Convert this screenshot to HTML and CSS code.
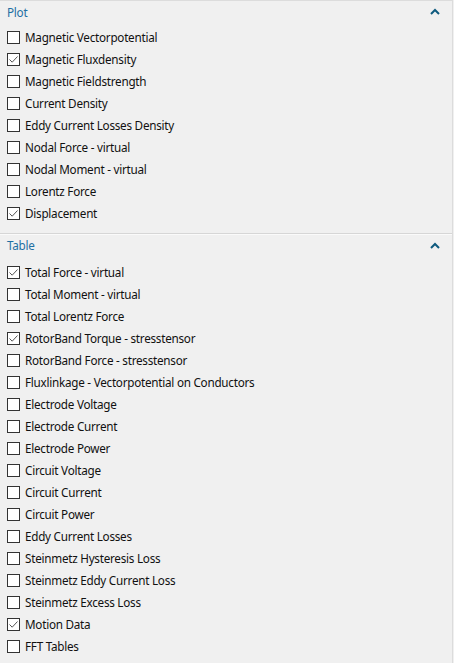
FILE: index.html
```html
<!DOCTYPE html>
<html>
<head>
<meta charset="utf-8">
<link rel="stylesheet" href="styles.css">
</head>
<body>
<div class="panel">
  <section class="group">
    <div class="group-head">
      <span class="group-title">Plot</span>
      <svg class="chev" width="10" height="7" viewBox="0 0 10 7"><path d="M1 6 L5 2 L9 6" fill="none" stroke="#0e5a7e" stroke-width="2"/></svg>
    </div>
    <ul class="list">
      <li class="item"><span class="box"></span>Magnetic Vectorpotential</li>
      <li class="item"><span class="box checked"><svg viewBox="0 0 13 13"><path d="M2.5 6.5 L5.2 9.2 L10.5 3.5" fill="none" stroke="#555" stroke-width="1"/></svg></span>Magnetic Fluxdensity</li>
      <li class="item"><span class="box"></span>Magnetic Fieldstrength</li>
      <li class="item"><span class="box"></span>Current Density</li>
      <li class="item"><span class="box"></span>Eddy Current Losses Density</li>
      <li class="item"><span class="box"></span>Nodal Force - virtual</li>
      <li class="item"><span class="box"></span>Nodal Moment - virtual</li>
      <li class="item"><span class="box"></span>Lorentz Force</li>
      <li class="item"><span class="box checked"><svg viewBox="0 0 13 13"><path d="M2.5 6.5 L5.2 9.2 L10.5 3.5" fill="none" stroke="#555" stroke-width="1"/></svg></span>Displacement</li>
    </ul>
  </section>
  <section class="group second">
    <div class="group-head">
      <span class="group-title">Table</span>
      <svg class="chev" width="10" height="7" viewBox="0 0 10 7"><path d="M1 6 L5 2 L9 6" fill="none" stroke="#0e5a7e" stroke-width="2"/></svg>
    </div>
    <ul class="list">
      <li class="item"><span class="box checked"><svg viewBox="0 0 13 13"><path d="M2.5 6.5 L5.2 9.2 L10.5 3.5" fill="none" stroke="#555" stroke-width="1"/></svg></span>Total Force - virtual</li>
      <li class="item"><span class="box"></span>Total Moment - virtual</li>
      <li class="item"><span class="box"></span>Total Lorentz Force</li>
      <li class="item"><span class="box checked"><svg viewBox="0 0 13 13"><path d="M2.5 6.5 L5.2 9.2 L10.5 3.5" fill="none" stroke="#555" stroke-width="1"/></svg></span>RotorBand Torque - stresstensor</li>
      <li class="item"><span class="box"></span>RotorBand Force - stresstensor</li>
      <li class="item"><span class="box"></span>Fluxlinkage - Vectorpotential on Conductors</li>
      <li class="item"><span class="box"></span>Electrode Voltage</li>
      <li class="item"><span class="box"></span>Electrode Current</li>
      <li class="item"><span class="box"></span>Electrode Power</li>
      <li class="item"><span class="box"></span>Circuit Voltage</li>
      <li class="item"><span class="box"></span>Circuit Current</li>
      <li class="item"><span class="box"></span>Circuit Power</li>
      <li class="item"><span class="box"></span>Eddy Current Losses</li>
      <li class="item"><span class="box"></span>Steinmetz Hysteresis Loss</li>
      <li class="item"><span class="box"></span>Steinmetz Eddy Current Loss</li>
      <li class="item"><span class="box"></span>Steinmetz Excess Loss</li>
      <li class="item"><span class="box checked"><svg viewBox="0 0 13 13"><path d="M2.5 6.5 L5.2 9.2 L10.5 3.5" fill="none" stroke="#555" stroke-width="1"/></svg></span>Motion Data</li>
      <li class="item"><span class="box"></span>FFT Tables</li>
    </ul>
  </section>
</div>
</body>
</html>
```

FILE: styles.css
```css
html, body {
  margin: 0;
  padding: 0;
  background: #f0f0f0;
}
body {
  font-family: "Noto Sans", "Open Sans", sans-serif;
  font-size: 11.7px;
  letter-spacing: -0.25px;
  color: #111;
}
.panel {
  width: 453px;
  height: 663px;
  box-sizing: border-box;
  border-top: 1px solid #dcdcdc;
  border-right: 1px solid #dcdcdc;
  overflow: hidden;
}
.group-head {
  height: 21px;
  display: flex;
  align-items: center;
  justify-content: space-between;
  padding: 0 12px 0 7px;
}
.group-title {
  color: #1f6fa3;
}
.chev {
  display: block;
}
.list {
  list-style: none;
  margin: 0;
  padding: 4px 0 9px 0;
}
.item {
  height: 22px;
  display: flex;
  align-items: center;
  padding-left: 7px;
  gap: 5px;
  white-space: nowrap;
}
.box {
  width: 13px;
  height: 13px;
  box-sizing: border-box;
  border: 1px solid #333;
  background: #fff;
  flex: none;
  position: relative;
}
.box svg {
  position: absolute;
  left: -1px;
  top: -1px;
  width: 13px;
  height: 13px;
}
.second {
  border-top: 1px solid #d6d6d6;
  box-shadow: inset 0 1px 0 #fafafa;
}
.second .group-head {
  height: 22px;
}
.second .list {
  padding-top: 5px;
}
```
